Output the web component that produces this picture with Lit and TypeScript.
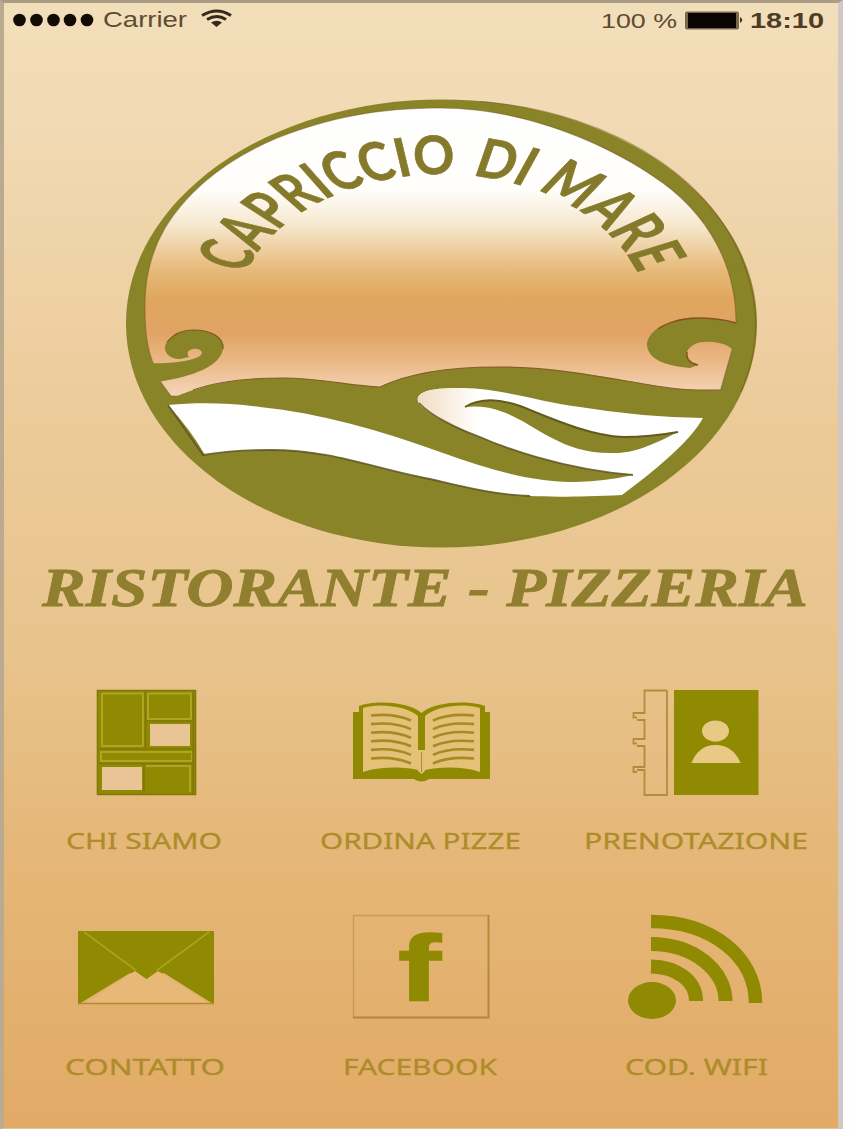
import { LitElement, html, svg, css } from "lit";
import { customElement } from "lit/decorators.js";

interface Tile {
  label: string;
  x: number;
  y: number;
  from: number;
  length: number;
  art: unknown;
}

const lines = [0, 1, 2, 3, 4, 5];

const news = svg`
  <rect x="97" y="690" width="99" height="105" fill="#8f8a02"/>
  <path d="M102 693.500H143V746M148 693.500H191V719H148ZM102 693V746H143M101 752H192V761H101ZM146 766H190V792" fill="none" stroke="#aca624" stroke-width="2"/>
  <path d="M97.500 690.500H195.500V794.500H97.500ZM98 749H195M98 763.500H195M145.500 691V748M146 721H192M144 764V794M193 691V794" fill="none" stroke="#83770a" stroke-width="1.600"/>
  <rect x="150" y="724" width="40" height="22" fill="#e9c495"/>
  <rect x="102" y="767" width="40" height="23" fill="#e9c495"/>`;

const book = svg`
  <path d="M353 712H359V706C372 700 409 701 421.500 713C434 701 471 700 485 706V712H490V779H429Q421.500 784 414 779H353Z" fill="#8f8a02"/>
  <path d="M363 708C376 703 406 705 418 716V770C406 767 382 766 363 772Z" fill="#e5c077"/>
  <path d="M425 716C437 705 467 703 480 708V772C462 766 438 767 425 770Z" fill="#e5c077"/>
  <path d="M418 750H425V771L421.500 774L418 771Z" fill="#e5c077"/>
  <path d="M421.500 752V772" stroke="#a88e30" stroke-width="1"/>
  ${lines.map(
    (i) => svg`<path d="M371 ${715.5 + i * 8.6}Q394 ${713 + i * 8.6} 411 ${720.5 + i * 8.6}M433 ${720.5 + i * 8.6}Q449 ${713 + i * 8.6} 474 ${715.5 + i * 8.6}" fill="none" stroke="#a58b25" stroke-width="2.600"/>`
  )}`;

const contacts = svg`
  <path d="M667 690.500H644.500V713H633.500V717.500H637M637 720H644.500V739H633.500V743.500H637M637 746H644.500V767H633.500V772H637M637 770H644.500V795H667V690.500" fill="none" stroke="#b58a3c" stroke-width="1.800"/>
  <rect x="674" y="690" width="84.500" height="105" fill="#8f8a02"/>
  <ellipse cx="715.500" cy="731" rx="13.500" ry="10.500" fill="#e9ca85"/>
  <path d="M691.500 763C696 752 703 745 715.500 745C728 745 736 752 740.500 763Z" fill="#e9ca85"/>`;

const envelope = svg`
  <path d="M78 931H214V1004.500L164 973L147 980L130 973L78 1004.500Z" fill="#8f8a02"/>
  <path d="M130 974L137 970L146.500 979L156 970L163 974L208 1003H86Z" fill="#e7b877"/>
  <path d="M84 932L146.500 978L209 932" fill="none" stroke="#aaa31c" stroke-width="1.600"/>
  <path d="M135 971L146.500 979L158 971L153 968H140Z" fill="#8f8a02"/>
  <path d="M79 1003.500H214" stroke="#b38c32" stroke-width="1.600"/>`;

const facebook = svg`
  <path d="M353.500 1017V915.500H488" fill="none" stroke="#c79c55" stroke-width="1.400"/>
  <path d="M353 1017.500H488.500V915" fill="none" stroke="#b08a38" stroke-width="2"/>
  <text x="398" y="1000" font-family="Liberation Sans, sans-serif" font-weight="700" font-size="92" textLength="43" lengthAdjust="spacingAndGlyphs" fill="#8f8a02" stroke="#8f8a02" stroke-width="1.500">f</text>`;

const feed = svg`
  <ellipse cx="652" cy="1000.500" rx="24" ry="18.500" fill="#8f8a02"/>
  <path d="M651 966.500C677 967 696 981 696 1001" fill="none" stroke="#8f8a02" stroke-width="14"/>
  <path d="M651 944C694 944 725.500 971 725.500 1001" fill="none" stroke="#8f8a02" stroke-width="14"/>
  <path d="M651 921.500C712 921.500 755.500 957 755.500 1003" fill="none" stroke="#8f8a02" stroke-width="13.500"/>`;

const tiles: Tile[] = [
  { label: "CHI SIAMO", x: 8, y: 680, from: 66, length: 156, art: news },
  { label: "ORDINA PIZZE", x: 284, y: 680, from: 320, length: 201, art: book },
  { label: "PRENOTAZIONE", x: 560, y: 680, from: 584, length: 224, art: contacts },
  { label: "CONTATTO", x: 8, y: 906, from: 65, length: 160, art: envelope },
  { label: "FACEBOOK", x: 284, y: 906, from: 343, length: 154, art: facebook },
  { label: "COD. WIFI", x: 560, y: 906, from: 625, length: 143, art: feed },
];

@customElement("app-root")
export class AppRoot extends LitElement {
  static styles = css`
    :host {
      display: block;
      width: 852px;
      height: 1136px;
      background: #fefefe;
      overflow: hidden;
    }
    svg {
      display: block;
      flex: none;
    }
    .screen {
      box-sizing: border-box;
      width: 843px;
      height: 1129px;
      border-style: solid;
      border-width: 3px 5px 1px 4px;
      border-color: #ab9c86 #cfc8c4 #d8c4a8 #b9aa90;
      background: linear-gradient(#f2dfba 0, #f1d9b3 130px, #ecca98 430px, #e8c48d 640px, #e5b778 850px, #e2aa66 1125px);
      display: flex;
      flex-direction: column;
    }
    .status {
      display: flex;
      justify-content: space-between;
      height: 37px;
    }
    .status text {
      font-family: "Liberation Sans", sans-serif;
    }
    .headline text {
      font-family: "Liberation Serif", serif;
      font-weight: 700;
      font-style: italic;
    }
    .arc {
      font-family: Lato, sans-serif;
      font-weight: 700;
    }
    .menu {
      display: grid;
      grid-template-columns: repeat(3, 276px);
      grid-auto-rows: 226px;
      margin-left: 4px;
    }
    .tile {
      display: flex;
      flex-direction: column;
    }
    .label {
      font-family: "Noto Sans", sans-serif;
      font-size: 22.500px;
      fill: #ad8c2a;
      stroke: #ad8c2a;
      stroke-width: 0.300px;
    }
  `;

  private status() {
    return html`<div class="status">
      <svg width="246" height="37" viewBox="4 3 246 37">
        ${[19.5, 36.5, 53.5, 70, 87].map(
          (x) => svg`<circle cx="${x}" cy="20" r="6.300" fill="#120c05"/>`
        )}
        <text x="103" y="27" font-size="21.500" textLength="84" lengthAdjust="spacingAndGlyphs" fill="#5d4b32">Carrier</text>
        <g fill="none" stroke="#38291a" stroke-width="3">
          <path d="M202 15.500Q217 6.500 231 15.500"/>
          <path d="M207 19.500Q217 13.500 226 19.500"/>
        </g>
        <path d="M211 22.500Q217 19 222 22.500L216.500 27Z" fill="#38291a"/>
      </svg>
      <svg width="238" height="37" viewBox="600 3 238 37">
        <text x="601" y="27.500" font-size="21" textLength="76" lengthAdjust="spacingAndGlyphs" fill="#5d4b32">100 %</text>
        <rect x="685" y="11.500" width="54" height="18" rx="2" fill="#796850"/>
        <rect x="688" y="13" width="48" height="15" fill="#090604"/>
        <path d="M740 17Q744.500 20 740 23Z" fill="#3d2e1c"/>
        <text x="750" y="27.500" font-size="21.500" font-weight="700" textLength="74" lengthAdjust="spacingAndGlyphs" fill="#4e3c25">18:10</text>
      </svg>
    </div>`;
  }

  private logo() {
    return html`<svg width="834" height="515" viewBox="4 40 834 515">
      <defs>
        <linearGradient id="sky" gradientUnits="userSpaceOnUse" x1="0" y1="108" x2="0" y2="400">
          <stop offset="0" stop-color="#ffffff"/>
          <stop offset="0.280" stop-color="#fffefb"/>
          <stop offset="0.400" stop-color="#f6e8cf"/>
          <stop offset="0.540" stop-color="#e8bd80"/>
          <stop offset="0.650" stop-color="#dfa75d"/>
          <stop offset="0.770" stop-color="#e1a364"/>
          <stop offset="0.880" stop-color="#ebbb8b"/>
          <stop offset="1" stop-color="#f5dac0"/>
        </linearGradient>
        <linearGradient id="foam" gradientUnits="userSpaceOnUse" x1="418" y1="0" x2="478" y2="0">
          <stop offset="0" stop-color="#f1dcc3"/>
          <stop offset="1" stop-color="#f1dcc3" stop-opacity="0"/>
        </linearGradient>
        <path id="ring" d="M-148 0A148 148 0 0 1 148 0"/>
      </defs>
      <ellipse cx="441.500" cy="323.500" rx="315.500" ry="224" fill="#8a8428"/>
      <path d="M480 101.500C613 112 740 184 755 310Q759 350 741 392" fill="none" stroke="#75561f" stroke-width="1.200" opacity="0.500"/>
      <path d="M153 363C147 348 145 330 145 312C144 280 151 252 165 228C190 187 230 158 277 138C330 117 380 108 440 108C530 108 615 148 663 183C708 216 736 265 736 322L732 350L720 392V396H171L160 381Z" fill="url(#sky)" stroke="#75501f" stroke-opacity="0.450" stroke-width="1.200"/>
      <path d="M150 363C165 364 190 362 200 356C205 352 199 348 193 349C188 350 186 353 189 357L180 359C170 359 164 353 165 346C168 336 180 331 193 330C212 330 224 338 223 349C220 366 195 376 158 382Z" fill="#8a8428"/>
      <path d="M167 342C175 332 185 330 193 330C212 330 224 338 223 349" fill="none" stroke="#7b5c20" stroke-width="1.200"/>
      <path d="M738 324C722 320 709 318 697 318C667 318 648 331 647 344C647 359 665 366 690 368L698 365C689 363 686 358 687 352C690 344 700 341 713 342C722 343 728 345 733 350L742 350Z" fill="#8a8428"/>
      <path d="M736 323C722 319 709 318 697 318C680 318 665 324 658 329M698 365C689 363 686 358 687 352" fill="none" stroke="#855223" stroke-width="1.500"/>
      <path d="M165 402C190 389 225 378 283 378C320 378 350 386 380 387C405 375 440 367 497 367C560 367 610 379 663 387Q690 391 724 390L715 425L620 500L215 455Z" fill="#8a8428"/>
      <path d="M193 390C218 381 250 378 283 378C320 378 350 386 380 387C405 375 440 367 497 367C560 367 610 379 663 387Q690 391 721 390" fill="none" stroke="#855f23" stroke-width="1.200"/>
      <path d="M168 405C200 402 230 403 260 407C320 413 380 430 443 453C490 470 535 483 575 482Q607 481 633 475C560 469 500 446 480 437C455 428 430 415 420 405C412 394 425 387 463 388C505 389 540 402 580 407Q640 417 703 418C692 438 665 463 622 495C580 497 550 497 530 496C490 495 450 483 420 477C370 467 330 450 270 450Q235 450 205 455Q190 429 168 405Z" fill="#ffffff"/>
      <path d="M420 405C412 394 425 387 463 388L480 389V437C455 428 430 415 420 405Z" fill="url(#foam)"/>
      <path d="M168 405L203 455Q235 450 270 450C330 450 370 467 420 477C450 483 490 495 530 496M419 403C430 415 455 428 480 437C500 446 560 469 633 475" fill="none" stroke="#5d5420" stroke-width="1.800" opacity="0.850"/>
      <path d="M465 407C480 398 500 399 520 406C550 418 590 436 623 437Q650 437 678 432C650 446 635 453 613 453C560 454 535 423 503 412Q485 405 465 407Z" fill="#8a8428"/>
      <path d="M465 407C480 398 500 399 520 406C550 418 590 436 623 437Q650 437 678 432" fill="none" stroke="#625a20" stroke-width="2"/>
      <g transform="translate(441.500 322) scale(1.406 1)">
        <text class="arc" font-size="53" fill="#857a2b" stroke="#857a2b" stroke-width="0.700">
          <textPath href="#ring" startOffset="49" textLength="193" lengthAdjust="spacingAndGlyphs">CAPRICCIO</textPath>
          <textPath href="#ring" startOffset="254" textLength="39" lengthAdjust="spacingAndGlyphs">DI</textPath>
          <textPath href="#ring" startOffset="302" textLength="113" lengthAdjust="spacingAndGlyphs">MARE</textPath>
        </text>
      </g>
    </svg>`;
  }

  render() {
    return html`<main class="screen">
      ${this.status()} ${this.logo()}
      <svg class="headline" width="834" height="125" viewBox="4 555 834 125">
        <text x="42" y="606" font-size="55.500" textLength="766" lengthAdjust="spacingAndGlyphs" fill="#8f7f2e" stroke="#8f7f2e" stroke-width="0.800">RISTORANTE - PIZZERIA</text>
      </svg>
      <nav class="menu">
        ${tiles.map(
          (t) => html`<div class="tile">
            <svg width="276" height="140" viewBox="${t.x} ${t.y} 276 140">${t.art}</svg>
            <svg width="276" height="40" viewBox="${t.x} ${t.y + 140} 276 40">
              <text class="label" x="${t.from}" y="${t.y + 168.5}" textLength="${t.length}" lengthAdjust="spacingAndGlyphs">${t.label}</text>
            </svg>
          </div>`
        )}
      </nav>
    </main>`;
  }
}
